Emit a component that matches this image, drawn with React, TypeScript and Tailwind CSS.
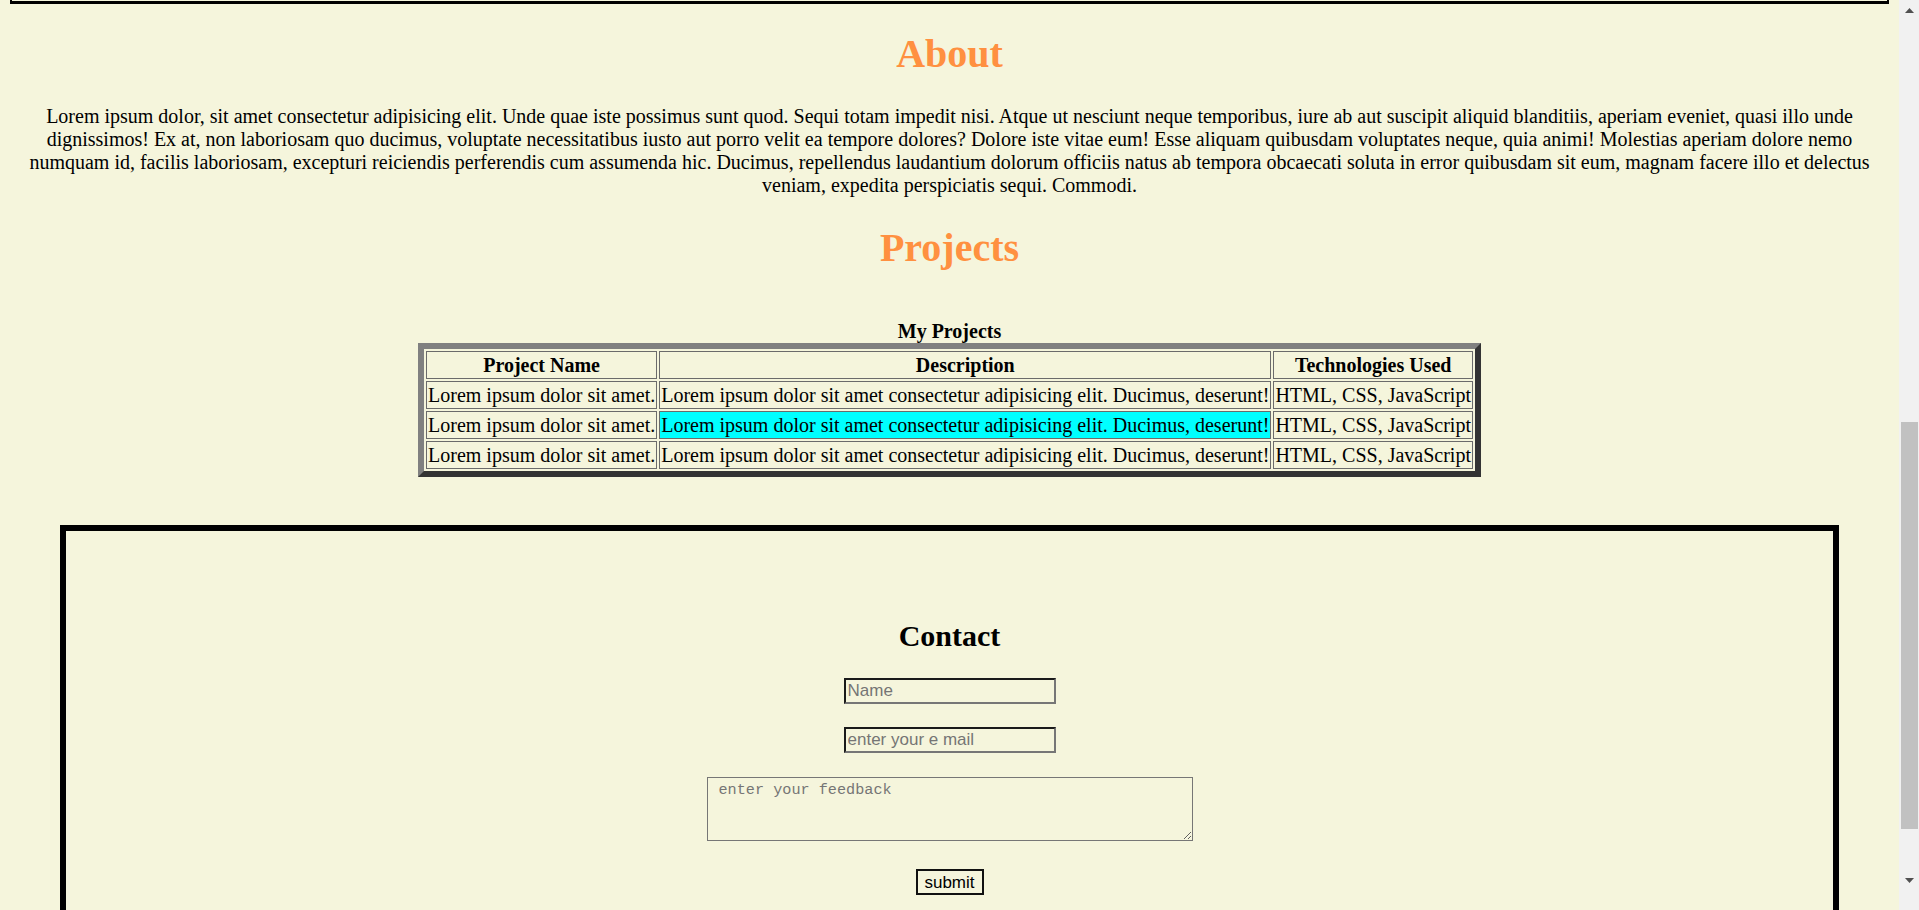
export default function App() {
  const rows = [0, 1, 2];
  return (
    <div className="flex h-[910px] w-full overflow-hidden bg-[#f5f5dc] font-['Liberation_Serif','Times_New_Roman',serif] text-[20px] leading-[23px] text-black">
      <div className="h-full min-w-0 flex-1 overflow-hidden px-[10px]">
        <div className="h-[4px] border-x-2 border-b-[3px] border-solid border-black" />
        <h1 className="mt-[27px] text-center text-[40px] font-bold leading-[46px] text-[#ff9040]">About</h1>
        <p className="mt-[28px] text-center">
          Lorem ipsum dolor, sit amet consectetur adipisicing elit. Unde quae iste possimus sunt quod. Sequi totam impedit nisi. Atque ut nesciunt neque temporibus, iure ab aut suscipit aliquid blanditiis, aperiam eveniet, quasi illo unde
          <br />
          dignissimos! Ex at, non laboriosam quo ducimus, voluptate necessitatibus iusto aut porro velit ea tempore dolores? Dolore iste vitae eum! Esse aliquam quibusdam voluptates neque, quia animi! Molestias aperiam dolore nemo
          <br />
          numquam id, facilis laboriosam, excepturi reiciendis perferendis cum assumenda hic. Ducimus, repellendus laudantium dolorum officiis natus ab tempora obcaecati soluta in error quibusdam sit eum, magnam facere illo et delectus
          <br />
          veniam, expedita perspiciatis sequi. Commodi.
        </p>
        <h1 className="mt-[28px] text-center text-[40px] font-bold leading-[46px] text-[#ff9040]">Projects</h1>
        <table className="mx-auto mt-[49px] border-separate border-spacing-[2px] border-[6px] border-solid border-t-[#808080] border-l-[#808080] border-r-[#333333] border-b-[#333333]">
          <caption className="font-bold leading-[23px]">My Projects</caption>
          <thead>
            <tr>
              <th className="border border-solid border-[#6b6b6b] p-[1px] text-center font-bold leading-[24px]">Project Name</th>
              <th className="border border-solid border-[#6b6b6b] p-[1px] text-center font-bold leading-[24px]">Description</th>
              <th className="border border-solid border-[#6b6b6b] p-[1px] text-center font-bold leading-[24px]">Technologies Used</th>
            </tr>
          </thead>
          <tbody>
            {rows.map((i) => (
              <tr key={i}>
                <td className="border border-solid border-[#6b6b6b] p-[1px] text-left leading-[24px]">Lorem ipsum dolor sit amet.</td>
                <td className={i === 1 ? "border border-solid border-[#6b6b6b] bg-[#00ffff] p-[1px] text-left leading-[24px]" : "border border-solid border-[#6b6b6b] p-[1px] text-left leading-[24px]"}>
                  Lorem ipsum dolor sit amet consectetur adipisicing elit. Ducimus, deserunt!
                </td>
                <td className="border border-solid border-[#6b6b6b] p-[1px] text-left leading-[24px]">HTML, CSS, JavaScript</td>
              </tr>
            ))}
          </tbody>
        </table>
        <div className="mx-[50px] mt-[48px] flex flex-col items-center border-[6px] border-solid border-black pb-[80px] pt-[88px]">
          <h2 className="text-center text-[30px] font-bold leading-[34px]">Contact</h2>
          <input
            type="text"
            placeholder="Name"
            className="mt-[25px] h-[26px] w-[212px] border-2 border-solid border-t-[#1a1a1a] border-l-[#1a1a1a] border-r-[#767676] border-b-[#767676] bg-transparent px-[2px] font-['Liberation_Sans',Arial,sans-serif] text-[17px] text-black outline-none placeholder:text-[#757575]"
          />
          <input
            type="email"
            placeholder="enter your e mail"
            className="mt-[23px] h-[26px] w-[212px] border-2 border-solid border-t-[#1a1a1a] border-l-[#1a1a1a] border-r-[#767676] border-b-[#767676] bg-transparent px-[2px] font-['Liberation_Sans',Arial,sans-serif] text-[17px] text-black outline-none placeholder:text-[#757575]"
          />
          <textarea
            placeholder="enter your feedback"
            className="mt-[24px] h-[64px] w-[486px] border border-solid border-[#767676] bg-transparent pl-[11px] pr-[3px] pt-[3px] font-['Liberation_Mono','Courier_New',monospace] text-[15.2px] leading-[19px] text-black outline-none placeholder:text-[#757575]"
          />
          <button className="mt-[28px] h-[26px] w-[68px] border-2 border-solid border-[#111111] bg-transparent font-['Liberation_Sans',Arial,sans-serif] text-[17px] leading-[19px] text-black">
            submit
          </button>
        </div>
      </div>
      <div className="flex h-full w-[20px] shrink-0 flex-col bg-[#f1f1f1]">
        <div className="flex h-[21px] items-center justify-center">
          <svg width="9" height="5" viewBox="0 0 9 5">
            <polygon points="4.5,0 9,5 0,5" fill="#505050" />
          </svg>
        </div>
        <div className="flex-1">
          <div className="ml-[2px] mt-[401px] h-[407px] w-[17px] bg-[#c1c1c1]" />
        </div>
        <div className="flex h-[40px] items-start justify-center pt-[8px]">
          <svg width="9" height="5" viewBox="0 0 9 5">
            <polygon points="0,0 9,0 4.5,5" fill="#505050" />
          </svg>
        </div>
      </div>
    </div>
  );
}
